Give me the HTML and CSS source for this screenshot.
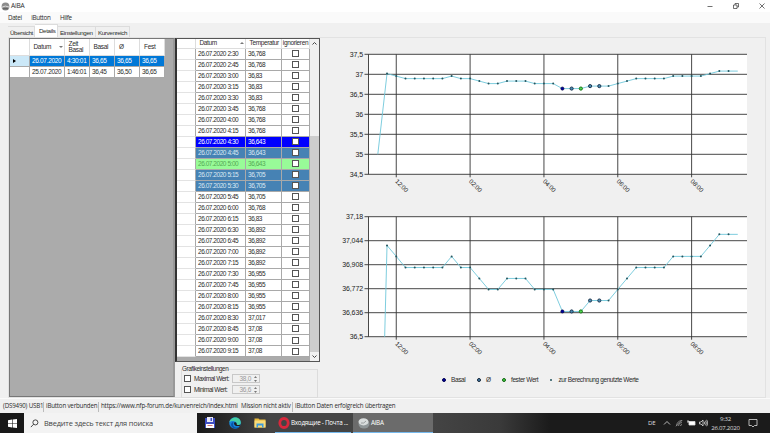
FILE: index.html
```html
<!DOCTYPE html>
<html lang="de">
<head>
  <meta charset="UTF-8" />
  <meta name="viewport" content="width=device-width, initial-scale=1.0"/>
  <title>AiBA</title>
  <link rel="stylesheet" href="styles.css">
</head>
<body>

  <header class="titlebar">
    <svg class="app-icon" viewBox="0 0 9 9"><circle cx="4.5" cy="4.5" r="3.9" fill="#8c8c8c"/><path d="M1 5.2 Q4 3 8 5" stroke="#ddd" stroke-width="1" fill="none"/><path d="M2 6.8h5" stroke="#555" fill="none"/></svg>
    <span class="title">AiBA</span>
    <div class="window-buttons">
      <svg viewBox="0 0 8 8"><path d="M1.5 4.5h5"/></svg>
      <svg viewBox="0 0 8 8"><path d="M1.5 3h3.5v3.5h-3.5zM3 3v-1.5h3.5v3.5h-1.5"/></svg>
      <svg viewBox="0 0 8 8"><path d="M1.5 1.5l5 5M6.5 1.5l-5 5"/></svg>
    </div>
  </header>

  <nav class="menu">
    <a>Datei</a>
    <a>iButton</a>
    <a>Hilfe</a>
  </nav>

  <div class="tabs">
    <span class="tab tab-overview">Übersicht</span>
    <span class="tab tab-details active">Details</span>
    <span class="tab tab-settings">Einstellungen</span>
    <span class="tab tab-curves">Kurvenreich</span>
  </div>

  <main class="page">
    <section class="days">
      <div class="day head">
        <span></span><span>Datum<i class="sort-down"></i></span><span>Zeit<br>Basal</span><span>Basal</span><span>Ø</span><span>Fest</span>
      </div>
      <div class="day selected">
        <span><i class="current"></i></span><span>26.07.2020</span><span>4:30:01</span><span>36,65</span><span>36,65</span><span>36,65</span>
      </div>
      <div class="day">
        <span></span><span>25.07.2020</span><span>1:46:01</span><span>36,45</span><span>36,50</span><span>36,65</span>
      </div>
    </section>

    <section class="middle">
      <div class="readings">
        <div class="readings-grid" id="readings">
          <div class="reading head">
            <span></span><span>Datum<i class="sort-up"></i></span><span>Temperatur</span><span>ignorieren</span>
          </div>
        </div>
        <div class="scrollbar">
          <svg viewBox="0 0 9 9"><path d="M2.5 5.5l2-2 2 2"/></svg>
          <div class="track"><div class="thumb"></div></div>
          <svg viewBox="0 0 9 9"><path d="M2.5 3.5l2 2 2-2"/></svg>
        </div>
      </div>
      <fieldset class="settings">
        <legend>Grafikeinstellungen</legend>
        <div class="limit"><i class="box"></i><span>Maximal Wert:</span><b>38,0<svg viewBox="0 0 5 8"><path d="M1 3l1.5-2 1.5 2zM1 5l1.5 2 1.5-2z"/></svg></b></div>
        <div class="limit"><i class="box"></i><span>Minimal Wert:</span><b>36,6<svg viewBox="0 0 5 8"><path d="M1 3l1.5-2 1.5 2zM1 5l1.5 2 1.5-2z"/></svg></b></div>
      </fieldset>
    </section>

    <section class="charts">
      <svg class="chart" id="chart-full" viewBox="0 0 428 163"></svg>
      <svg class="chart" id="chart-zoom" viewBox="0 0 428 163"></svg>
      <div class="legend">
        <span class="l-basal"><i class="dot basal"></i>Basal</span>
        <span class="l-avg"><i class="dot avg"></i>Ø</span>
        <span class="l-fixed"><i class="dot fixed"></i>fester Wert</span>
        <span class="l-used"><i class="dot used"></i>zur Berechnung genutzte Werte</span>
      </div>
    </section>
  </main>

  <footer class="status">
    <span class="s-port">(DS9490) USB1</span>
    <span class="s-button">iButton verbunden</span>
    <span class="s-url">https://www.nfp-forum.de/kurvenreich/index.html</span>
    <span class="s-mission">Mission nicht aktiv</span>
    <span class="s-data">iButton Daten erfolgreich übertragen</span>
  </footer>

  <div class="taskbar">
    <div class="start">
      <svg viewBox="0 0 9 9"><path d="M0 1.2l4-.6v3.6H0zM4.6.5L9 0v4.2H4.6zM0 4.8h4v3.6l-4-.6zM4.6 4.8H9V9l-4.4-.6z" fill="#fff"/></svg>
    </div>
    <div class="search">
      <svg viewBox="0 0 10 10"><circle cx="6" cy="3.8" r="2.8"/><path d="M4 5.8L1 9"/></svg>
      <span>Введите здесь текст для поиска</span>
    </div>
    <div class="pins">
      <svg viewBox="0 0 12 12"><path d="M1 1h10v10H1z" fill="#3f4fc4"/><path d="M3 0h6v5H3z" fill="#e8e8f4"/><path d="M6.5 1h1.5v3H6.5z" fill="#3f4fc4"/><path d="M2 7h8v4h-8z" fill="#fff"/><path d="M3.5 8.5h5" stroke="#b33" stroke-width=".7"/></svg>
      <svg viewBox="0 0 12 12"><circle cx="6" cy="6" r="5.8" fill="#1683d8"/><path d="M.4 5.2C1.5-1 11.5-1.5 11.8 5.5c0 2-1.500 2.800-3.600 2.700-1.200 0-1-.7-.6-1.400C8.2 4.5 3.5 2.5.4 5.2z" fill="#45cfa5"/><path d="M4.200 6.500c-.8 2.800 2 4.800 6 3.500-2 2.500-7 2-8-1.500C1.800 7 2.500 5.500 4.500 4.800z" fill="#0b56a6"/><path d="M5 6.200c0 2.400 2.500 3.200 5.600 2.800l1-1.800c-1.600 1.300-4.500 1.200-4-.6.3-1.200-2.600-2-2.600-.4z" fill="#1c1c1c"/></svg>
      <svg viewBox="0 0 12 12"><path d="M.5 1.500h4l1 1h6V10.500H.5z" fill="#e9b93a"/><path d="M.5 3.500h11v7H.5z" fill="#fbdc78"/><path d="M2.500 10.500V6.500h7v4H8v-2H4v2z" fill="#3e9bdc"/></svg>
    </div>
    <div class="task opera">
      <svg viewBox="0 0 12 12"><ellipse cx="6" cy="6" rx="4.2" ry="4.5" fill="none" stroke="#d8283c" stroke-width="2.8"/></svg>
      <span>Входящие - Почта ...</span>
    </div>
    <div class="task aiba">
      <svg viewBox="0 0 12 12"><ellipse cx="6" cy="7" rx="5.5" ry="4.5" fill="#8f9698"/><ellipse cx="5.5" cy="4.8" rx="5" ry="3.6" fill="#d9dddd"/><path d="M3 6q3 1 5-2" stroke="#8b9192" stroke-width=".8" fill="none"/></svg>
      <span>AiBA</span>
    </div>
    <div class="tray">
      <span class="lang">DE</span>
      <svg class="t-up" viewBox="0 0 8 8"><path d="M1 5.5l3-3 3 3"/></svg>
      <svg class="t-net" viewBox="0 0 8 8"><path d="M1.5 7A5.5 5.5 0 0 1 7 1.5M3.5 7A3.5 3.5 0 0 1 7 3.5M5.5 7A1.5 1.5 0 0 1 7 5.5M1 7.3L7.3 1" stroke="#999"/></svg>
      <svg class="t-bat" viewBox="0 0 9 8"><path d="M2 2.5h6v3.5H2z" fill="#fff"/><path d="M1 1v3M.5 2.5h2"/></svg>
      <svg class="t-vol" viewBox="0 0 9 8"><path d="M.5 3h1.500l2-2v6L2 5H.5zM5.300 2.700q1 1.300 0 2.600M6.500 1.700q1.700 2.300 0 4.600M7.700.8q2.300 3.200 0 6.400"/></svg>
      <div class="clock">9:32<br>26.07.2020</div>
      <svg class="t-note" viewBox="0 0 10 10"><path d="M1 1.500h8v6H6.500l-1.500 1.500-1.500-1.500H1z"/></svg>
    </div>
  </div>

  <script src="script.js"></script>
</body>
</html>
```
FILE: styles.css
```css
:root {
  --face: #f0f0f0;
  --grid-gray: #ababab;
  --line: #a9a9a9;
  --text: #2b2b2b;
  --select: #0078d7;
  --steel: #4682b4;
}

* {
  box-sizing: border-box;
  margin: 0;
  padding: 0;
}

body {
  width: 770px;
  height: 433px;
  overflow: hidden;
  display: flex;
  flex-direction: column;
  font-family: 'Liberation Sans', sans-serif;
  font-size: 6.5px;
  letter-spacing: -0.3px;
  line-height: 8px;
  color: var(--text);
  background: var(--face);
  white-space: nowrap;
}

svg {
  display: block;
  flex: none;
}

/* window */
.titlebar {
  height: 12px;
  display: flex;
  align-items: center;
  background: #fff;
  padding-right: 4px;
}

.app-icon {
  width: 9px;
  height: 9px;
  margin-left: 1px;
}

.title {
  margin-left: 1px;
  font-family: 'Open Sans', sans-serif;
  font-size: 6.6px;
  letter-spacing: -0.2px;
}

.window-buttons {
  margin-left: auto;
  display: flex;
  gap: 18px;
}

.window-buttons svg {
  width: 8px;
  height: 8px;
  fill: none;
  stroke: #333;
  stroke-width: 0.7;
}

.menu {
  height: 11px;
  display: flex;
  align-items: center;
  gap: 9.5px;
  padding-left: 8px;
  background: #fafafa;
  font-family: 'Open Sans', sans-serif;
  font-size: 6.3px;
  letter-spacing: -0.35px;
}

.tabs {
  height: 14px;
  display: flex;
  align-items: flex-end;
  padding-left: 8px;
}

.tab {
  height: 11px;
  line-height: 11px;
  padding-left: 2px;
  border: 1px solid #dcdcdc;
  border-width: 1px 1px 0 0;
  font-size: 6.2px;
  letter-spacing: -0.35px;
}

.tab-overview { width: 27px; }
.tab-details { width: 23px; }
.tab-settings { width: 38px; }
.tab-curves { width: 34px; }

.tab.active {
  height: 13px;
  padding-left: 4px;
  background: #fff;
}

.page {
  height: 361px;
  display: flex;
  margin: 0 4px 0 8px;
  border: 1px solid #e2e2e2;
}

/* day list */
.days {
  width: 166px;
  background: var(--grid-gray);
  border: 1px solid #777;
  border-right: 2px solid #999;
}

.day {
  display: grid;
  grid-template-columns: 20px 35px 25px 25px 25px 25px;
  width: 155px;
  height: 11px;
  background: #fff;
}

.day span {
  display: flex;
  align-items: center;
  padding-left: 2px;
  border-right: 1px solid var(--line);
  border-bottom: 1px solid var(--line);
  letter-spacing: -0.32px;
}

.day.head {
  height: 17px;
}

.day.head span {
  padding-left: 3.5px;
  border-color: #ddd;
  line-height: 6.5px;
}

.day.head span:nth-child(5),
.day.head span:nth-child(6) {
  padding-left: 4px;
}

.day.selected span {
  background: var(--select);
  color: #fff;
}

.day.selected span:first-child {
  background: #cbe8f8;
  padding-left: 3px;
}

.current {
  border: 2px solid transparent;
  border-left: 3px solid #000;
  border-right: 0;
}

.sort-down,
.sort-up {
  margin-left: 8px;
  border: 2px solid transparent;
  border-bottom: 0;
  border-top-color: #777;
}

.sort-up {
  margin-left: 23px;
  border: 2px solid transparent;
  border-top: 0;
  border-bottom-color: #777;
}

/* readings */
.middle {
  width: 145px;
}

.readings {
  display: flex;
  height: 324px;
  background: var(--grid-gray);
  border: 1px solid #555;
  border-left: 2px solid #333;
}

.readings-grid {
  width: 133px;
}

.reading {
  display: grid;
  grid-template-columns: 19px 50px 36px 28px;
  height: 11.03px;
  background: #fff;
}

.reading span {
  display: flex;
  align-items: center;
  padding-left: 2px;
  border-right: 1px solid var(--line);
  border-bottom: 1px solid var(--line);
  letter-spacing: -0.45px;
}

.reading span:first-child {
  border-bottom-color: #e3e3e3;
}

.reading span:last-child {
  justify-content: center;
  padding: 0;
}

.reading.head {
  height: 9.6px;
}

.reading.head span {
  padding-left: 3.5px;
  border-color: #ddd;
  letter-spacing: -0.35px;
}

.reading.head span:last-child {
  padding-left: 0;
}

.reading.basal span { color: #fff; background: #00f; }
.reading.avg span { color: #dbe8f2; background: var(--steel); }
.reading.fixed span { color: #55a855; background: #98fb98; }

.reading span:first-child {
  background: #fff !important;
}

.box {
  width: 7px;
  height: 7px;
  background: #fff;
  border: 1px solid #555;
}

.scrollbar {
  width: 9px;
  display: flex;
  flex-direction: column;
  background: var(--face);
}

.scrollbar svg {
  width: 9px;
  height: 9px;
  fill: none;
  stroke: #444;
}

.track {
  flex: 1;
  display: flex;
  align-items: flex-end;
}

.thumb {
  width: 9px;
  height: 216px;
  background: #cdcdcd;
}

.settings {
  height: 33px;
  margin: 3px 2px 0 6px;
  padding: 0 0 0 2px;
  border: 1px solid #dcdcdc;
}

.settings legend {
  height: 8px;
  margin-left: -2px;
  font-size: 6.3px;
  letter-spacing: -0.4px;
}

.limit {
  height: 11px;
  display: flex;
  align-items: center;
}

.limit span {
  width: 38px;
  margin-left: 3px;
  letter-spacing: -0.48px;
}

.limit b {
  width: 28px;
  height: 9px;
  display: flex;
  align-items: center;
  justify-content: flex-end;
  border: 1px solid #c8c8c8;
  font-weight: normal;
  color: #999;
}

.limit svg {
  width: 5px;
  height: 8px;
  margin-left: 2px;
  margin-right: 1px;
  fill: #777;
}

/* charts */
.charts {
  width: 428px;
  margin-left: 11px;
  padding-top: 8px;
}

.chart {
  width: 428px;
  height: 163px;
}

.chart text {
  font-size: 7px;
  letter-spacing: -0.1px;
  fill: #222;
}

.chart .time {
  font-size: 6.3px;
}

.plot { fill: #fff; }
.grid-line { stroke: #333; stroke-width: 0.9; }
.curve { fill: none; stroke: #6fc7da; stroke-width: 0.9; }
.mark-used { fill: #24555e; }
.mark-basal { fill: #0000a0; stroke: #000030; stroke-width: 0.6; }
.mark-avg { fill: #4c8cb4; stroke: #122a44; stroke-width: 0.9; }
.mark-fixed { fill: #55d955; stroke: #0b6a0b; stroke-width: 0.9; }

.legend {
  display: flex;
  margin-top: 4px;
  padding-left: 110.5px;
  letter-spacing: -0.4px;
}

.legend span {
  display: flex;
  align-items: center;
}

.l-basal { width: 35px; }
.l-avg { width: 25px; }
.l-fixed { width: 48px; }

.dot {
  width: 4px;
  height: 4px;
  margin-right: 5.5px;
  border: 1px solid #123;
  border-radius: 50%;
}

.dot.basal { background: #0000a0; border-color: #000050; }
.dot.avg { background: var(--steel); }
.dot.fixed { background: #4c4; border-color: #161; }
.dot.used { width: 2px; height: 2px; background: #24555e; border: 0; margin-right: 7px; }

/* status */
.status {
  height: 15px;
  display: flex;
  align-items: flex-end;
  padding: 0 0 1px 3px;
  font-family: 'Open Sans', sans-serif;
  font-size: 6.2px;
  letter-spacing: -0.18px;
  border-top: 1px solid #fafafa;
}

.status span {
  height: 10px;
}

.s-port { width: 41px; border-right: 1px solid #bbb; }
.s-button { width: 55px; padding-left: 2px; border-right: 1px solid #bbb; }
.s-url { width: 142px; padding-left: 2px; }
.s-mission { width: 52px; border-right: 1px solid #bbb; }
.s-data { padding-left: 2px; }

/* taskbar */
.taskbar {
  height: 20px;
  display: flex;
  font-family: 'Open Sans', sans-serif;
  color: #fff;
  background: linear-gradient(90deg, #1b1b1b 200px, #444 270px, #444 433px, #3a3a3a 500px, #1b1b1b 550px);
}

.start {
  width: 24px;
  display: flex;
  align-items: center;
  justify-content: center;
  background: #181818;
}

.start svg {
  width: 9px;
  height: 9px;
}

.search {
  width: 173px;
  display: flex;
  align-items: center;
  padding-left: 6px;
  gap: 5px;
  color: #444;
  background: #f3f3f3;
  font-size: 7.4px;
  letter-spacing: -0.15px;
}

.search svg {
  width: 9px;
  height: 9px;
  fill: none;
  stroke: #222;
  stroke-width: 0.9;
}

.pins {
  width: 78px;
  display: flex;
  align-items: center;
  gap: 13px;
  padding-left: 7px;
}

.pins svg,
.task svg {
  width: 12px;
  height: 12px;
}

.task {
  display: flex;
  align-items: center;
  padding: 1px 0 0 3px;
  font-size: 6.3px;
  letter-spacing: -0.25px;
  border-bottom: 1px solid #76b9ed;
}

.task span {
  margin-left: 1px;
}

.opera {
  width: 76px;
}

.aiba {
  width: 80px;
  margin-left: 2px;
  padding-left: 5px;
  background: #6b6b6b;
}

.tray {
  flex: 1;
  display: flex;
  align-items: center;
  padding-left: 215px;
  font-size: 6.1px;
  letter-spacing: -0.25px;
  color: #ddd;
}

.tray svg {
  height: 8px;
  width: 8px;
  fill: none;
  stroke: #ddd;
  stroke-width: 0.8;
}

.lang { width: 15px; }
.tray .t-net { margin-left: 4px; }
.tray .t-bat { width: 9px; margin-left: 4px; }
.tray .t-vol { width: 9px; margin-left: 3px; }
.tray .t-note { width: 10px; height: 10px; margin-left: 8px; }

.clock {
  width: 29px;
  margin-left: 3px;
  line-height: 9px;
  text-align: center;
}
```
FILE: script.js
```javascript
// one reading every 15 minutes, starting at 23:30
const temps = [
  35, 37.017, 36.955, 36.892, 36.892, 36.892, 36.892, 36.892, 36.955, 36.892,
  36.892, 36.83, 36.768, 36.768, 36.83, 36.83, 36.83, 36.768, 36.768, 36.768,
  36.643, 36.643, 36.643, 36.705, 36.705, 36.705, 36.768, 36.83, 36.892, 36.892,
  36.892, 36.892, 36.955, 36.955, 36.955, 36.955, 37.017, 37.08, 37.08, 37.08
];
const kinds = { 20: 'basal', 21: 'avg', 22: 'fixed', 23: 'avg', 24: 'avg' };

const comma = n => String(n).replace('.', ',');

function fillReadings() {
  const list = document.getElementById('readings');
  for (let i = 12; i < temps.length; i++) {
    const minutes = (i - 2) * 15;
    const time = Math.floor(minutes / 60) + ':' + String(minutes % 60).padStart(2, '0');
    const row = document.createElement('div');
    row.className = 'reading ' + (kinds[i] || '');
    row.innerHTML = `<span></span><span>26.07.2020 ${time}</span><span>${comma(temps[i])}</span><span><i class="box"></i></span>`;
    list.appendChild(row);
  }
}

function drawChart(id, ticks, top) {
  const left = 37.5, right = 416, height = 120;
  const max = ticks[0], min = ticks[ticks.length - 1];
  const x = i => left + 9.3 + i * 9.23;
  const y = v => top + (max - v) / (max - min) * height;
  let out = `<clipPath id="${id}-clip"><rect x="${left}" y="${top}" width="${right - left}" height="${height}"/></clipPath>`;
  out += `<rect class="plot" x="${left}" y="${top}" width="${right - left}" height="${height}"/>`;

  ticks.forEach(t => {
    out += `<line class="grid-line" x1="${left - 4}" x2="${right}" y1="${y(t)}" y2="${y(t)}"/>`;
    out += `<text x="${left - 5.5}" y="${y(t) + 2.4}" text-anchor="end">${comma(t)}</text>`;
  });
  out += `<line class="grid-line" x1="${left}" x2="${left}" y1="${top}" y2="${top + height}"/>`;
  ['12:00', '02:00', '04:00', '06:00', '08:00'].forEach((label, n) => {
    const gx = x(2 + n * 8);
    out += `<line class="grid-line" x1="${gx}" x2="${gx}" y1="${top}" y2="${top + height + 3}"/>`;
    out += `<text class="time" transform="translate(${gx - 1.5} ${top + height + 7.5}) rotate(45)">${label}</text>`;
  });

  const points = temps.map((t, i) => `${x(i)},${y(t)}`).join(' ');
  out += `<polyline class="curve" clip-path="url(#${id}-clip)" points="${points}"/>`;
  for (let i = 1; i < temps.length - 1; i++) {
    const kind = kinds[i] || 'used';
    out += `<circle class="mark-${kind}" cx="${x(i)}" cy="${y(temps[i])}" r="${kind === 'used' ? 1 : 1.6}"/>`;
  }
  document.getElementById(id).innerHTML = out;
}

fillReadings();
drawChart('chart-full', [37.5, 37, 36.5, 36, 35.5, 35, 34.5], 8.3);
drawChart('chart-zoom', [37.18, 37.044, 36.908, 36.772, 36.636, 36.5], 7.7);
```
